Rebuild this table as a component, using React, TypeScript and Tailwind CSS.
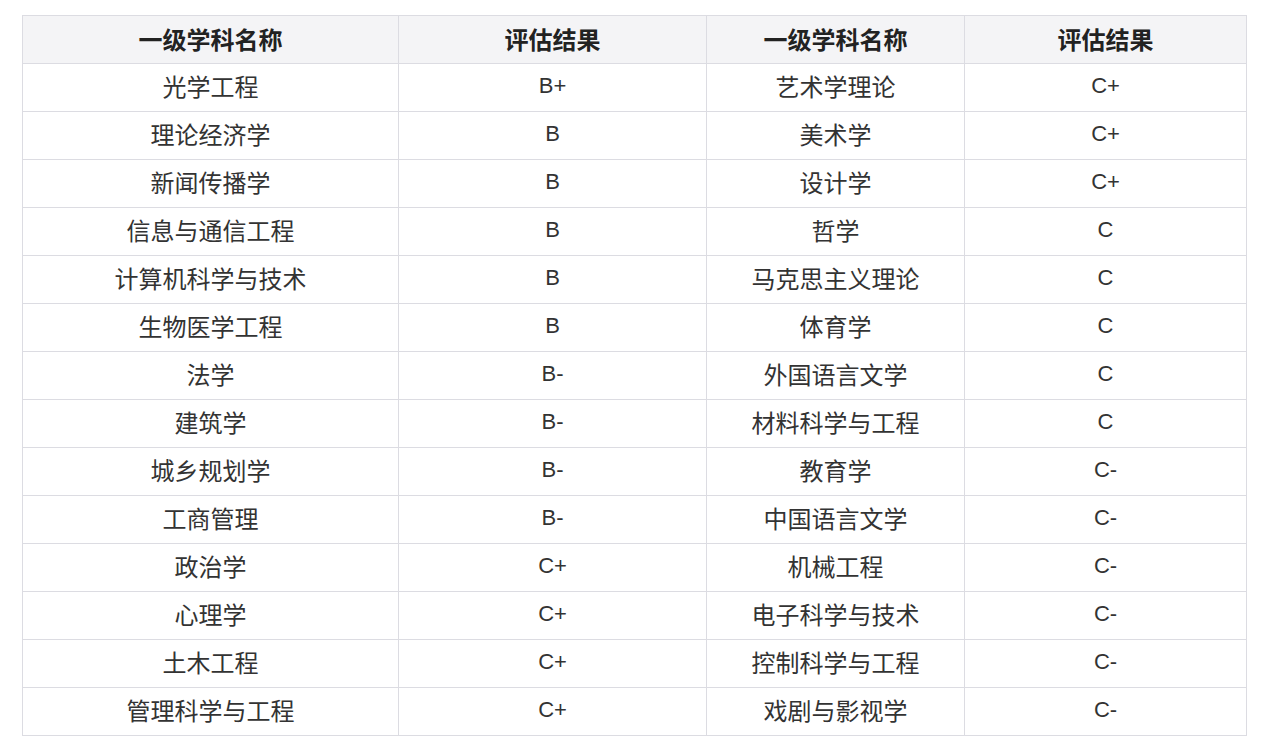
import React from "react";

const rows: [string, string, string, string][] = [
  ["光学工程", "B+", "艺术学理论", "C+"],
  ["理论经济学", "B", "美术学", "C+"],
  ["新闻传播学", "B", "设计学", "C+"],
  ["信息与通信工程", "B", "哲学", "C"],
  ["计算机科学与技术", "B", "马克思主义理论", "C"],
  ["生物医学工程", "B", "体育学", "C"],
  ["法学", "B-", "外国语言文学", "C"],
  ["建筑学", "B-", "材料科学与工程", "C"],
  ["城乡规划学", "B-", "教育学", "C-"],
  ["工商管理", "B-", "中国语言文学", "C-"],
  ["政治学", "C+", "机械工程", "C-"],
  ["心理学", "C+", "电子科学与技术", "C-"],
  ["土木工程", "C+", "控制科学与工程", "C-"],
  ["管理科学与工程", "C+", "戏剧与影视学", "C-"],
];

const font = { fontFamily: '"Noto Sans CJK SC", "Noto Sans", sans-serif' };
const latin = { fontFamily: '"Liberation Sans", Arial, sans-serif' };

export default function App() {
  return (
    <div className="w-[1274px] h-[742px] bg-white pt-[15px] pl-[22px]" style={font}>
      <table className="border-collapse table-fixed w-[1224px] text-[#333]">
        <colgroup>
          <col className="w-[376px]" />
          <col className="w-[308px]" />
          <col className="w-[258px]" />
          <col className="w-[282px]" />
        </colgroup>
        <thead>
          <tr className="bg-[#f4f4f6] h-[48px]">
            {["一级学科名称", "评估结果", "一级学科名称", "评估结果"].map((h, i) => (
              <th
                key={i}
                className="border border-[#dcdce2] text-center text-[24px] font-bold text-[#222] p-0 pb-[2px] leading-none"
              >
                {h}
              </th>
            ))}
          </tr>
        </thead>
        <tbody>
          {rows.map((r, i) => (
            <tr key={i} className="h-[48px]">
              <td className="border border-[#dcdce2] text-center text-[24px] p-0 pb-[4px] leading-none">{r[0]}</td>
              <td className="border border-[#dcdce2] text-center text-[22px] p-0 pb-[4px] leading-none text-[#333]" style={latin}>{r[1]}</td>
              <td className="border border-[#dcdce2] text-center text-[24px] p-0 pb-[4px] leading-none">{r[2]}</td>
              <td className="border border-[#dcdce2] text-center text-[22px] p-0 pb-[4px] leading-none text-[#333]" style={latin}>{r[3]}</td>
            </tr>
          ))}
        </tbody>
      </table>
    </div>
  );
}
